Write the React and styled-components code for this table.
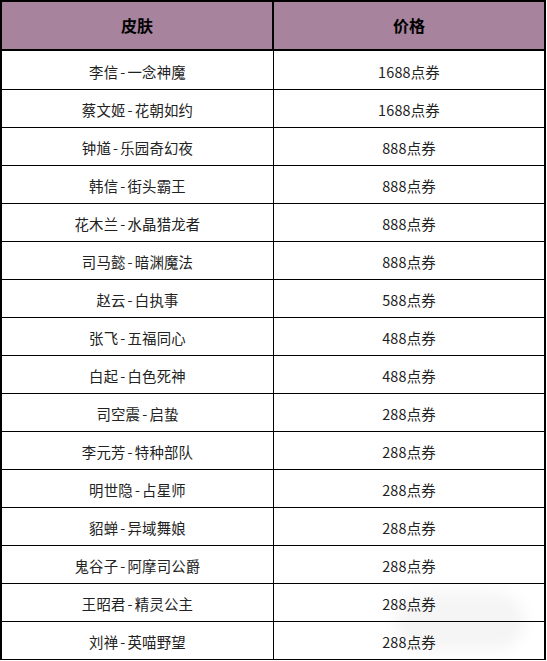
import React from "react";
import styled, { createGlobalStyle } from "styled-components";

const GlobalStyle = createGlobalStyle`
    html, body {
        margin: 0;
        padding: 0;
        background: #ffffff;
    }
    body {
        font-family: "Noto Sans CJK SC", "Noto Sans", "Liberation Sans", sans-serif;
    }
`;

const skins = [
    { hero: "李信", skin: "一念神魔", price: "1688点券" },
    { hero: "蔡文姬", skin: "花朝如约", price: "1688点券" },
    { hero: "钟馗", skin: "乐园奇幻夜", price: "888点券" },
    { hero: "韩信", skin: "街头霸王", price: "888点券" },
    { hero: "花木兰", skin: "水晶猎龙者", price: "888点券" },
    { hero: "司马懿", skin: "暗渊魔法", price: "888点券" },
    { hero: "赵云", skin: "白执事", price: "588点券" },
    { hero: "张飞", skin: "五福同心", price: "488点券" },
    { hero: "白起", skin: "白色死神", price: "488点券" },
    { hero: "司空震", skin: "启蛰", price: "288点券" },
    { hero: "李元芳", skin: "特种部队", price: "288点券" },
    { hero: "明世隐", skin: "占星师", price: "288点券" },
    { hero: "貂蝉", skin: "异域舞娘", price: "288点券" },
    { hero: "鬼谷子", skin: "阿摩司公爵", price: "288点券" },
    { hero: "王昭君", skin: "精灵公主", price: "288点券" },
    { hero: "刘禅", skin: "英喵野望", price: "288点券" },
];

const Page = styled.div`
    position: relative;
    width: 547px;
    height: 661px;
    overflow: hidden;
`;

const Sheet = styled.div`
    width: 546px;
    box-sizing: border-box;
    border: 2px solid #000;
    border-bottom: none;
`;

const HeaderRow = styled.div`
    display: grid;
    grid-template-columns: 272px 1fr;
    height: 47px;
    background: #a7839e;
    border-bottom: 2px solid #000;
`;

const HeaderCell = styled.div`
    display: flex;
    align-items: center;
    justify-content: center;
    font-size: 16px;
    font-weight: 700;
    color: #000;
    padding-bottom: 2px;
    &:first-child {
        border-right: 2px solid #000;
    }
`;

const Row = styled.div`
    display: grid;
    grid-template-columns: 272px 1fr;
    height: 37px;
    border-bottom: 1px solid #000;
    &:first-child {
        height: 38px;
    }
`;

const Cell = styled.div`
    display: flex;
    align-items: center;
    justify-content: center;
    font-size: 14.4px;
    letter-spacing: 0.2px;
    color: #222;
    padding-top: 2px;
    &:first-child {
        border-right: 1px solid #000;
    }
`;

const Dash = styled.span`
    margin: 0 2px;
`;

const Smudge = styled.div`
    position: absolute;
    left: 395px;
    top: 592px;
    width: 130px;
    height: 58px;
    border-radius: 30px;
    background: rgba(0, 0, 0, 0.04);
    filter: blur(7px);
    pointer-events: none;
`;

function App() {
    return (
        <Page>
            <GlobalStyle />
            <Sheet>
                <HeaderRow>
                    <HeaderCell>皮肤</HeaderCell>
                    <HeaderCell>价格</HeaderCell>
                </HeaderRow>
                <div>
                    {skins.map((item) => (
                        <Row key={item.hero}>
                            <Cell>
                                {item.hero}
                                <Dash>-</Dash>
                                {item.skin}
                            </Cell>
                            <Cell>{item.price}</Cell>
                        </Row>
                    ))}
                </div>
            </Sheet>
            <Smudge />
        </Page>
    );
}

export default App;
